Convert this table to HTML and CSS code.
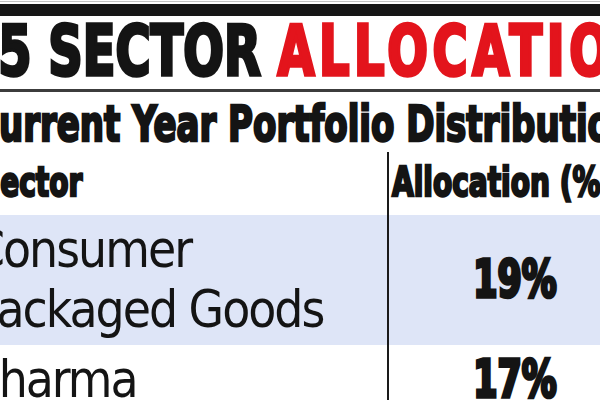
FILE: index.html
```html
<!DOCTYPE html>
<html lang="en">
<head>
  <meta charset="UTF-8">
  <meta name="viewport" content="width=device-width, initial-scale=1.0">
  <title>Sector Allocation</title>
  <link rel="stylesheet" href="styles.css">
</head>
<body>
  <div class="sheet">
    <div class="topbar"></div>

    <h1 class="title"><span class="squeeze">25 SECTOR <em>ALLOCATION</em></span></h1>
    <h2 class="subtitle"><span class="squeeze">Current Year Portfolio Distribution</span></h2>

    <table class="alloc">
      <thead>
        <tr>
          <th class="col-sector"><span class="squeeze">Sector</span></th>
          <th class="col-pct"><span class="squeeze">Allocation (%)</span></th>
        </tr>
      </thead>
      <tbody>
        <tr class="shade">
          <td class="sector">Consumer<br>Packaged Goods</td>
          <td class="pct"><span class="squeeze">19%</span></td>
        </tr>
        <tr>
          <td class="sector">Pharma</td>
          <td class="pct"><span class="squeeze">17%</span></td>
        </tr>
      </tbody>
    </table>
  </div>
</body>
</html>
```
FILE: styles.css
```css
* {
  margin: 0;
  padding: 0;
  box-sizing: border-box;
}
html, body {
  overflow: hidden;
}
body {
  background: #fff;
  color: #141414;
  font-family: 'DejaVu Sans Condensed', 'DejaVu Sans', sans-serif;
}
.sheet {
  width: 600px;
  height: 400px;
  overflow: hidden;
}
.topbar {
  height: 15px;
  margin-top: 1px;
  border-top: 1px solid #c4c4c4;
  border-bottom: 12px solid #161616;
}
/* the artwork uses a heavy condensed face, squeeze the bold one to match */
.squeeze {
  display: inline-block;
  white-space: nowrap;
  transform: scaleX(0.76);
  transform-origin: left center;
}
.title {
  margin-left: -35px;
  font-size: 70px;
  line-height: 70px;
  font-weight: 700;
  white-space: nowrap;
  border-bottom: 3px solid #3c3c3c;
  padding-bottom: 3px;
  width: 700px;
  -webkit-text-stroke: 3.5px currentColor;
}
.title em {
  font-style: normal;
  color: #e3141c;
  letter-spacing: 6px;
}
.subtitle {
  margin: 8px 0 0 -26px;
  font-size: 49px;
  line-height: 49px;
  font-weight: 700;
  white-space: nowrap;
  height: 52px;
  -webkit-text-stroke: 2.5px currentColor;
}
.subtitle .squeeze {
  transform: scaleX(0.772);
}
.alloc {
  margin-left: -30px;
  width: 671px;
  border-collapse: separate;
  border-spacing: 0;
  table-layout: fixed;
}
.alloc th {
  font-size: 41px;
  line-height: 41px;
  font-weight: 700;
  text-align: left;
  padding: 10px 0 12px;
  white-space: nowrap;
  -webkit-text-stroke: 2.5px currentColor;
}
.alloc .col-sector {
  width: 417px;
  padding-left: 10px;
}
.alloc .col-pct {
  padding-left: 3px;
}
.alloc .col-pct,
.alloc .pct {
  border-left: 2px solid #1a1a1a;
}
.alloc td {
  font-size: 51px;
  line-height: 60px;
  padding: 5px 0;
  vertical-align: middle;
}
.alloc .sector {
  padding-left: 3px;
  letter-spacing: -2px;
  white-space: nowrap;
}
.alloc .pct {
  font-weight: 700;
  text-align: center;
  -webkit-text-stroke: 3.5px currentColor;
}
.alloc .pct .squeeze {
  transform-origin: center center;
}
.alloc .shade td {
  background: #dee5f7;
}
```
